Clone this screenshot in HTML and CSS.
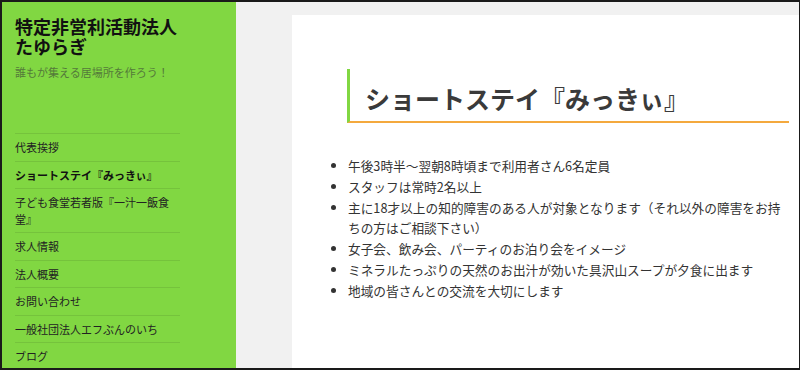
FILE: index.html
```html
<!DOCTYPE html>
<html lang="ja">
<head>
<meta charset="utf-8">
<title>ショートステイ『みっきぃ』 – 特定非営利活動法人たゆらぎ</title>
<link rel="stylesheet" href="styles.css">
</head>
<body>
<div class="frame">
  <aside class="sidebar">
    <h1 class="site-title">特定非営利活動法人たゆらぎ</h1>
    <p class="site-desc">誰もが集える居場所を作ろう！</p>
    <nav class="menu">
      <a class="menu-item" href="#">代表挨拶</a>
      <a class="menu-item current" href="#">ショートステイ『みっきぃ』</a>
      <a class="menu-item" href="#">子ども食堂若者版『一汁一飯食堂』</a>
      <a class="menu-item" href="#">求人情報</a>
      <a class="menu-item" href="#">法人概要</a>
      <a class="menu-item" href="#">お問い合わせ</a>
      <a class="menu-item" href="#">一般社団法人エフぶんのいち</a>
      <a class="menu-item" href="#">ブログ</a>
    </nav>
  </aside>
  <main class="main">
    <article class="article">
      <h2 class="entry-title">ショートステイ『みっきぃ』</h2>
      <ul class="entry-list">
        <li>午後3時半〜翌朝8時頃まで利用者さん6名定員</li>
        <li>スタッフは常時2名以上</li>
        <li>主に18才以上の知的障害のある人が対象となります（それ以外の障害をお持ちの方はご相談下さい）</li>
        <li>女子会、飲み会、パーティのお泊り会をイメージ</li>
        <li>ミネラルたっぷりの天然のお出汁が効いた具沢山スープが夕食に出ます</li>
        <li>地域の皆さんとの交流を大切にします</li>
      </ul>
    </article>
  </main>
</div>
</body>
</html>
```

FILE: styles.css
```css
* { box-sizing: border-box; }
html, body { margin: 0; padding: 0; }
body {
  font-family: "Noto Sans CJK JP", "Noto Sans", sans-serif;
  background: #fff;
}
.frame {
  width: 800px;
  height: 370px;
  border-style: solid;
  border-color: #1a1a1a;
  border-width: 2px 1px 2px 2px;
  display: flex;
  overflow: hidden;
}
.sidebar {
  width: 234px;
  flex: none;
  background: #81d742;
  padding: 15px 0 0 13px;
}
.site-title {
  margin: 0;
  width: 165px;
  font-size: 18px;
  line-height: 19.5px;
  font-weight: 700;
  color: #111;
}
.site-desc {
  margin: 8px 0 0;
  font-size: 11px;
  line-height: 16px;
  color: #54793a;
}
.menu {
  margin-top: 53px;
  width: 165px;
  display: flex;
  flex-direction: column;
}
.menu-item {
  display: block;
  border-top: 1px solid rgba(0, 0, 0, 0.09);
  padding: 5px 0;
  font-size: 11px;
  line-height: 16.5px;
  color: #222;
  text-decoration: none;
  line-break: strict;
}
.menu-item.current { font-weight: 700; color: #111; }
.main {
  flex: 1;
  background: #f1f1f1;
  padding: 13px 0 0 56px;
  display: flex;
}
.article {
  flex: 1;
  background: #fff;
  padding: 54px 10px 0 55px;
}
.entry-title {
  margin: 0;
  border-left: 3px solid #81d742;
  border-bottom: 2px solid #f4a93e;
  padding: 14px 0 8px 15px;
  font-size: 25px;
  line-height: 30px;
  font-weight: 700;
  color: #3a3a3a;
}
.entry-list {
  margin: 33px 0 0;
  padding: 0 0 0 1px;
  font-size: 12.7px;
  line-height: 20.8px;
  color: #333;
  line-break: strict;
}
.entry-list li { padding: 0; }
```
